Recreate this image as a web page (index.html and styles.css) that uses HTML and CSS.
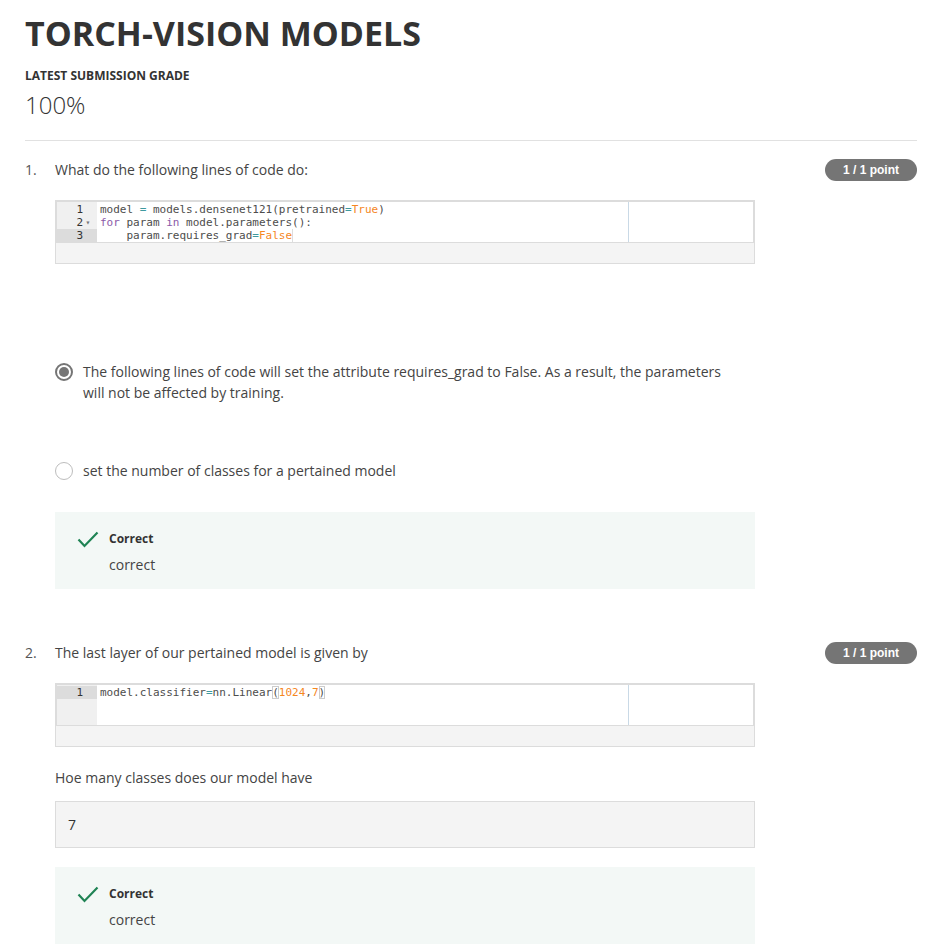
FILE: index.html
```html
<!DOCTYPE html>
<html>
<head>
<meta charset="utf-8">
<link rel="stylesheet" href="styles.css">
</head>
<body>
<div class="page">
  <header class="head">
    <h1 class="title">TORCH-VISION MODELS</h1>
    <div class="grade-label">LATEST SUBMISSION GRADE</div>
    <div class="grade">100%</div>
  </header>

  <section class="question q1">
    <div class="num">1.</div>
    <div class="body">
      <div class="prompt">What do the following lines of code do:</div>
      <div class="code-wrap">
        <div class="editor">
          <div class="gutter">
            <div class="gl">1<span class="fold"></span></div>
            <div class="gl">2<span class="fold">▾</span></div>
            <div class="gl active">3<span class="fold"></span></div>
          </div>
          <div class="lines">
            <div class="cl">model <span class="op">=</span> models.densenet121(pretrained<span class="op">=</span><span class="cst">True</span>)</div>
            <div class="cl"><span class="kw">for</span> param <span class="kw">in</span> model.parameters():</div>
            <div class="cl">    param.requires_grad<span class="op">=</span><span class="cst cur">False</span></div>
          </div>
          <div class="margin-line"></div>
        </div>
        <div class="code-foot"></div>
      </div>
      <div class="options">
        <div class="option">
          <span class="radio checked"></span>
          <span class="opt-text">The following lines of code will set the attribute requires_grad to False. As a result, the parameters will not be affected by training.</span>
        </div>
        <div class="option second">
          <span class="radio"></span>
          <span class="opt-text">set the number of classes for a pertained model</span>
        </div>
      </div>
      <div class="feedback">
        <svg class="check" width="22" height="17" viewBox="0 0 22 17"><path d="M1.5 8.5 L7.5 15 L20.5 1.5" fill="none" stroke="#1f8354" stroke-width="2.2"/></svg>
        <div class="fb-text">
          <div class="fb-title">Correct</div>
          <div class="fb-msg">correct</div>
        </div>
      </div>
    </div>
    <div class="badge">1 / 1 point</div>
  </section>

  <section class="question q2">
    <div class="num">2.</div>
    <div class="body">
      <div class="prompt">The last layer of our pertained model is given by</div>
      <div class="code-wrap">
        <div class="editor">
          <div class="gutter">
            <div class="gl active">1<span class="fold"></span></div>
          </div>
          <div class="lines">
            <div class="cl">model.classifier<span class="op">=</span>nn.Linear<span class="br">(</span><span class="cst">1024</span>,<span class="cst">7</span><span class="br">)</span></div>
          </div>
          <div class="margin-line"></div>
        </div>
        <div class="code-foot"></div>
      </div>
      <div class="prompt sub">Hoe many classes does our model have</div>
      <div class="answer">7</div>
      <div class="feedback">
        <svg class="check" width="22" height="17" viewBox="0 0 22 17"><path d="M1.5 8.5 L7.5 15 L20.5 1.5" fill="none" stroke="#1f8354" stroke-width="2.2"/></svg>
        <div class="fb-text">
          <div class="fb-title">Correct</div>
          <div class="fb-msg">correct</div>
        </div>
      </div>
    </div>
    <div class="badge">1 / 1 point</div>
  </section>
</div>
</body>
</html>
```

FILE: styles.css
```css
* { box-sizing: border-box; }
html, body { margin: 0; padding: 0; background: #fff; }
body {
  font-family: "Open Sans", "Liberation Sans", sans-serif;
  color: #444;
  font-size: 14px;
}
.page { padding: 0 30px 0 25px; }

.head { border-bottom: 1px solid #e1e1e1; padding-top: 13px; padding-bottom: 21px; }
.title {
  margin: 0;
  font-size: 34px;
  line-height: 40px;
  font-weight: 700;
  color: #333;
}
.grade-label {
  margin-top: 15px;
  font-size: 12px;
  line-height: 16px;
  font-weight: 700;
  color: #333;
}
.grade {
  margin-top: 7px;
  font-size: 24px;
  line-height: 28px;
  font-weight: 300;
  color: #333;
}

.question {
  display: grid;
  grid-template-columns: 30px 700px 1fr;
  align-items: start;
}
.q1 { margin-top: 18px; }
.q2 { margin-top: 53px; }
.num { line-height: 22px; color: #555; }
.prompt { line-height: 22px; color: #444; }
.badge {
  justify-self: end;
  width: 92px;
  height: 22px;
  border-radius: 11px;
  background: #757575;
  color: #fff;
  font-family: "Liberation Sans", Arial, sans-serif;
  font-weight: 700;
  font-size: 12px;
  line-height: 22px;
  text-align: center;
}

.code-wrap {
  margin-top: 19px;
  border: 1px solid #dcdcdc;
  background: #f4f4f4;
}
.editor {
  position: relative;
  display: flex;
  height: 42px;
  background: #fff;
  border: 1px solid #dcdcdc;
  font-family: "DejaVu Sans Mono", "Liberation Mono", monospace;
  font-size: 11px;
  line-height: 13px;
  color: #4d4d4c;
}
.gutter {
  width: 40px;
  background: #f0f0f0;
  color: #333;
  text-align: right;
  height: 100%;
  padding-top: 1px;
}
.gl { padding-right: 4px; height: 13px; }
.gl.active { background: #dcdcdc; }
.fold {
  display: inline-block;
  width: 10px;
  text-align: center;
  font-size: 8px;
  color: #777;
  vertical-align: top;
}
.lines { padding-left: 3px; padding-top: 1px; }
.cl { height: 13px; white-space: pre; }
.kw { color: #8959a8; }
.op { color: #3e999f; }
.cst { color: #f5871f; }
.cur { border-right: 1px solid #ddd; }
.br { outline: 1px solid #ccc; outline-offset: -1px; }
.margin-line {
  position: absolute;
  left: 571px;
  top: 0;
  bottom: 0;
  width: 1px;
  background: #c9d9e6;
}
.code-foot { height: 20px; }

.options { margin-top: 97px; }
.option { display: flex; align-items: flex-start; gap: 10px; }
.option.second { margin-top: 57px; }
.opt-text { line-height: 21px; width: 650px; color: #444; }
.radio {
  flex: none;
  width: 18px;
  height: 18px;
  border-radius: 50%;
  border: 1.5px solid #bdbdbd;
  margin-top: 1.5px;
  position: relative;
  background: #fff;
}
.radio.checked { border: 2px solid #757575; }
.radio.checked::after {
  content: "";
  position: absolute;
  left: 2px; top: 2px;
  width: 10px; height: 10px;
  border-radius: 50%;
  background: #757575;
}

.feedback {
  margin-top: 31px;
  background: #f3f8f6;
  display: flex;
  gap: 10px;
  padding: 18px 20px 14px 22px;
}
.check { margin-top: 1px; flex: none; }
.fb-title { font-size: 12px; font-weight: 700; line-height: 18px; color: #333; }
.fb-msg { margin-top: 7px; line-height: 20px; color: #444; }

.prompt.sub { margin-top: 20px; }
.answer {
  margin-top: 12px;
  height: 47px;
  border: 1px solid #dcdcdc;
  background: #f4f4f4;
  padding-left: 12px;
  line-height: 45px;
  color: #333;
}
.q2 .feedback { margin-top: 19px; }
```
